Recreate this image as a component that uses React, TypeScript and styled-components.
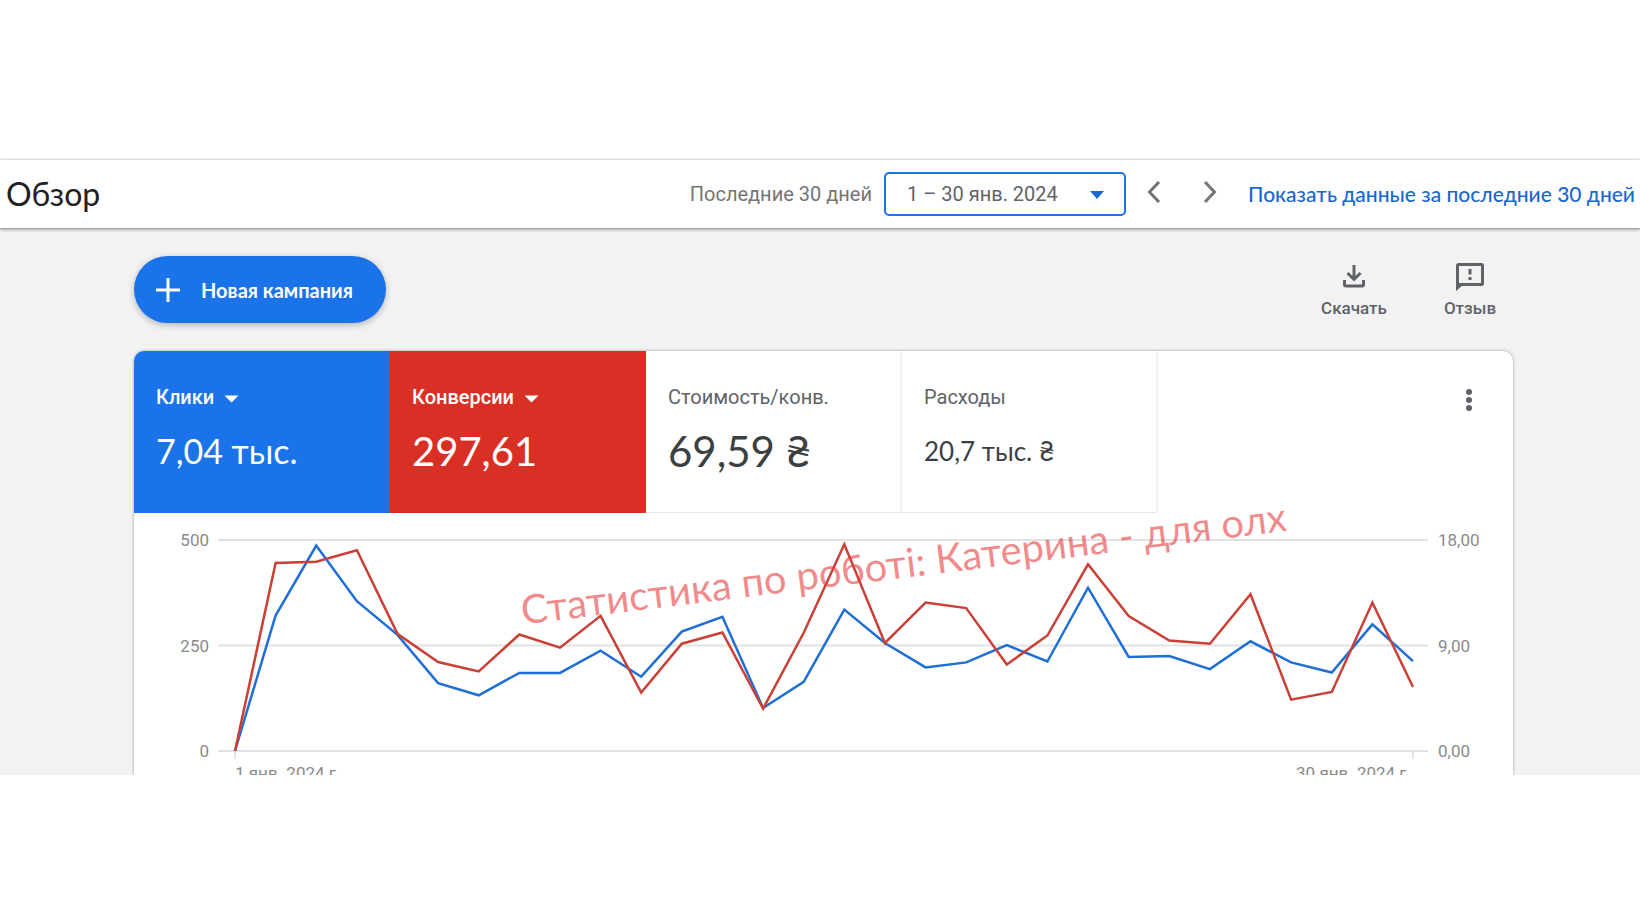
import React from "react";
import styled, { createGlobalStyle, css } from "styled-components";

const display = `Lato, "Liberation Sans", sans-serif`;
const body = `Roboto, "Liberation Sans", sans-serif`;

const GlobalStyle = createGlobalStyle`
  * { box-sizing: border-box; }
  body { margin: 0; background: #fff; font-family: ${body}; color: #3c4043; }
  button, select { font: inherit; color: inherit; }
  button { background: none; border: 0; padding: 0; cursor: pointer; }
  svg { display: block; }
`;

const Page = styled.div`
  padding: 159px 0 149px;
`;

const Header = styled.header`
  position: relative;
  display: flex;
  align-items: center;
  justify-content: space-between;
  height: 70px;
  padding: 0 5px 0 6px;
  background: #fff;
  border-top: 1px solid #dedede;
  border-bottom: 1px solid #a3a3a3;
  box-shadow: 0 1px 3px rgba(0, 0, 0, 0.3);
`;

const Title = styled.h1`
  margin: 0;
  font: 400 32px/40px ${display};
  color: #202124;
`;

const DateTools = styled.div`
  display: flex;
  align-items: center;
`;

const RangeLabel = styled.label`
  margin-right: 12px;
  font-size: 20px;
  line-height: 24px;
  color: #757575;
  white-space: nowrap;
`;

const SelectBox = styled.div`
  position: relative;
  width: 242px;
`;

const RangeSelect = styled.select`
  appearance: none;
  width: 100%;
  height: 44px;
  padding: 0 48px 0 21px;
  border: 2px solid #1a73e8;
  border-radius: 5px;
  background: #fff;
  font-size: 20px;
  color: #5f6368;
`;

const SelectArrow = styled.svg`
  position: absolute;
  top: 19px;
  right: 22px;
  pointer-events: none;
`;

const Stepper = styled.div`
  display: flex;
  gap: 24px;
  margin: 0 22px 0 12px;
`;

const StepButton = styled.button`
  width: 32px;
  height: 44px;
  display: grid;
  place-items: center;
  padding-bottom: 4px;
  color: #757575;
`;

const ShowLink = styled.a`
  font: 500 21px/24px ${display};
  color: #1967d2;
  text-decoration: none;
  white-space: nowrap;
`;

const Main = styled.main`
  padding: 27px 127px 0 134px;
  background: #f2f2f3;
  overflow: hidden;
`;

const Actions = styled.div`
  display: flex;
  justify-content: space-between;
  align-items: flex-start;
  margin-bottom: 28px;
`;

const NewCampaign = styled.button`
  display: flex;
  align-items: center;
  gap: 20px;
  height: 67px;
  padding: 0 33px 0 21px;
  border-radius: 34px;
  background: #1a73e8;
  color: #fff;
  font: 700 20px/24px ${display};
  box-shadow: 0 2px 6px rgba(60, 64, 67, 0.35);
`;

const ToolGroup = styled.div`
  display: flex;
  gap: 32px;
  padding-right: 1px;
`;

const ToolButton = styled.button`
  display: flex;
  flex-direction: column;
  align-items: center;
  gap: 5px;
  width: 84px;
  padding-top: 5px;
  color: #5f6368;
  font-size: 17px;
  font-weight: 500;
  line-height: 20px;
`;

const Card = styled.section`
  background: #fff;
  border-radius: 10px 10px 0 0;
  box-shadow: 0 0 3px rgba(60, 64, 67, 0.5);
`;

const Metrics = styled.div`
  display: flex;
  height: 162px;
`;

const tones = {
  blue: css`background: #1a73e8; color: #fff; border-top-left-radius: 10px;`,
  red: css`background: #d93025; color: #fff;`,
  plain: css`border-right: 2px solid #f1f1f1; border-bottom: 1px solid #e8e8e8;`,
};

const Metric = styled.div<{ $tone: keyof typeof tones }>`
  flex: 0 1 256px;
  padding: 34px 22px 0;
  ${(p) => tones[p.$tone]}
`;

const MetricName = styled.div`
  display: flex;
  align-items: center;
  gap: 10px;
  font-size: 20px;
  line-height: 24px;
  color: #5f6368;
`;

const MetricButton = styled(MetricName).attrs({ as: "button" })`
  color: #fff;
  font-weight: 500;
`;

const CaretIcon = styled.svg`
  margin-top: 4px;
`;

const MetricValue = styled.div<{ $size: number }>`
  font: 400 ${(p) => p.$size}px/48px ${display};
  margin-top: 18px;
  white-space: nowrap;
`;

const MoreButton = styled.button`
  width: 32px;
  height: 40px;
  margin: 29px 28px 0 auto;
  display: grid;
  place-items: center;
  color: #5f6368;
`;

const Chart = styled.div`
  position: relative;
  display: grid;
  grid-template-columns: 84px 1fr 85px;
  padding-top: 27px;
`;

const Axis = styled.div<{ $side: "left" | "right" }>`
  display: flex;
  flex-direction: column;
  justify-content: space-between;
  margin: -10px 0;
  padding: ${(p) => (p.$side === "left" ? "0 9px 0 0" : "0 0 0 10px")};
  text-align: ${(p) => (p.$side === "left" ? "right" : "left")};
  font-size: 17px;
  line-height: 20px;
  color: #8a8a8a;
`;

const Plot = styled.svg`
  width: 100%;
  height: 211px;
  overflow: visible;
`;

const Dates = styled.div`
  grid-column: 2;
  display: flex;
  justify-content: space-between;
  height: 24px;
  padding: 12px 17px 0;
  overflow: hidden;
  font-size: 17px;
  line-height: 20px;
  color: #8a8a8a;
`;

const Watermark = styled.div`
  position: absolute;
  left: 28%;
  top: 73px;
  padding-left: 4px;
  transform: rotate(-7deg);
  transform-origin: 0 100%;
  font: 400 40px/48px ${display};
  color: rgba(232, 60, 60, 0.6);
  white-space: nowrap;
  pointer-events: none;
`;

const clicks = [
  0, 321, 487, 355, 275, 161, 132, 185, 185, 238, 176, 283, 318, 102, 164, 335, 256, 198, 210, 251,
  212, 387, 223, 225, 194, 260, 210, 186, 300, 213,
];
const conversions = [
  0, 16.04, 16.15, 17.12, 10, 7.59, 6.79, 9.94, 8.81, 11.53, 4.98, 9.15, 10.11, 3.62, 10.08, 17.63,
  9.21, 12.66, 12.19, 7.39, 9.85, 15.93, 11.51, 9.43, 9.15, 13.38, 4.38, 5.04, 12.66, 5.46,
];

const plotLine = (values: number[], max: number) =>
  values
    .map((v, i) => `${(17 + (i * 1178) / 29).toFixed(1)},${(211 - (v / max) * 211).toFixed(1)}`)
    .join(" ");

const Caret = () => (
  <CaretIcon width="15" height="8" viewBox="0 0 15 8" aria-hidden="true">
    <path d="M0.5 0.5h14l-7 7z" fill="currentColor" />
  </CaretIcon>
);

export default function App() {
  return (
    <Page>
      <GlobalStyle />
      <Header>
        <Title>Обзор</Title>
        <DateTools>
          <RangeLabel htmlFor="range">Последние 30 дней</RangeLabel>
          <SelectBox>
            <RangeSelect id="range">
              <option>1 – 30 янв. 2024</option>
            </RangeSelect>
            <SelectArrow width="14" height="8" viewBox="0 0 14 8" aria-hidden="true">
              <path d="M0 0h14L7 8z" fill="#1967d2" />
            </SelectArrow>
          </SelectBox>
          <Stepper>
            <StepButton aria-label="Назад">
              <svg width="14" height="22" viewBox="0 0 14 22" fill="none" stroke="currentColor" strokeWidth="3">
                <path d="M12 1L2.500 11l9.500 10" />
              </svg>
            </StepButton>
            <StepButton aria-label="Вперёд">
              <svg width="14" height="22" viewBox="0 0 14 22" fill="none" stroke="currentColor" strokeWidth="3">
                <path d="M2 1l9.500 10L2 21" />
              </svg>
            </StepButton>
          </Stepper>
          <ShowLink href="#last30">Показать данные за последние 30 дней</ShowLink>
        </DateTools>
      </Header>
      <Main>
        <Actions>
          <NewCampaign>
            <svg width="26" height="26" viewBox="0 0 26 26" stroke="currentColor" strokeWidth="3" aria-hidden="true">
              <path d="M13 1v24M1 13h24" />
            </svg>
            Новая кампания
          </NewCampaign>
          <ToolGroup>
            <ToolButton>
              <svg width="32" height="32" viewBox="0 0 32 32" fill="none" stroke="currentColor" strokeWidth="3" aria-hidden="true">
                <path d="M16 4v14M9.500 12L16 18.500l6.500-6.500M6.500 19v4.500q0 1.500 1.500 1.500h16q1.500 0 1.500-1.500V19" />
              </svg>
              Скачать
            </ToolButton>
            <ToolButton>
              <svg width="32" height="32" viewBox="0 0 32 32" fill="none" stroke="currentColor" strokeWidth="3" aria-hidden="true">
                <path d="M3.500 26V4.500q0-1 1-1h23q1 0 1 1v18q0 1-1 1H6z" />
                <path d="M2 22v8l7-6z" fill="currentColor" stroke="none" />
                <path d="M16 8v5.500M16 16v3" />
              </svg>
              Отзыв
            </ToolButton>
          </ToolGroup>
        </Actions>
        <Card>
          <Metrics>
            <Metric $tone="blue">
              <MetricButton>Клики <Caret /></MetricButton>
              <MetricValue $size={34}>7,04 тыс.</MetricValue>
            </Metric>
            <Metric $tone="red">
              <MetricButton>Конверсии <Caret /></MetricButton>
              <MetricValue $size={40}>297,61</MetricValue>
            </Metric>
            <Metric $tone="plain">
              <MetricName>Стоимость/конв.</MetricName>
              <MetricValue $size={42}>69,59 ₴</MetricValue>
            </Metric>
            <Metric $tone="plain">
              <MetricName>Расходы</MetricName>
              <MetricValue $size={26}>20,7 тыс. ₴</MetricValue>
            </Metric>
            <MoreButton aria-label="Ещё">
              <svg width="6" height="24" viewBox="0 0 6 24" fill="currentColor">
                <circle cx="3" cy="4" r="3" />
                <circle cx="3" cy="12" r="3" />
                <circle cx="3" cy="20" r="3" />
              </svg>
            </MoreButton>
          </Metrics>
          <Chart>
            <Axis $side="left"><span>500</span><span>250</span><span>0</span></Axis>
            <Plot viewBox="0 0 1210 211" preserveAspectRatio="none" role="img" aria-label="Клики и конверсии">
              <path d="M0 0H1210M0 105.500H1210M0 211H1210M17 211v8M1195 211v8" stroke="#e2e2e2" strokeWidth="2" fill="none" />
              <g fill="none" strokeWidth="2.500">
                <polyline points={plotLine(clicks, 500)} stroke="#1f6fd6" />
                <polyline points={plotLine(conversions, 18)} stroke="#cb4036" />
              </g>
            </Plot>
            <Axis $side="right"><span>18,00</span><span>9,00</span><span>0,00</span></Axis>
            <Dates><span>1 янв. 2024 г.</span><span>30 янв. 2024 г.</span></Dates>
            <Watermark>Статистика по роботі: Катерина - для олх</Watermark>
          </Chart>
        </Card>
      </Main>
    </Page>
  );
}
